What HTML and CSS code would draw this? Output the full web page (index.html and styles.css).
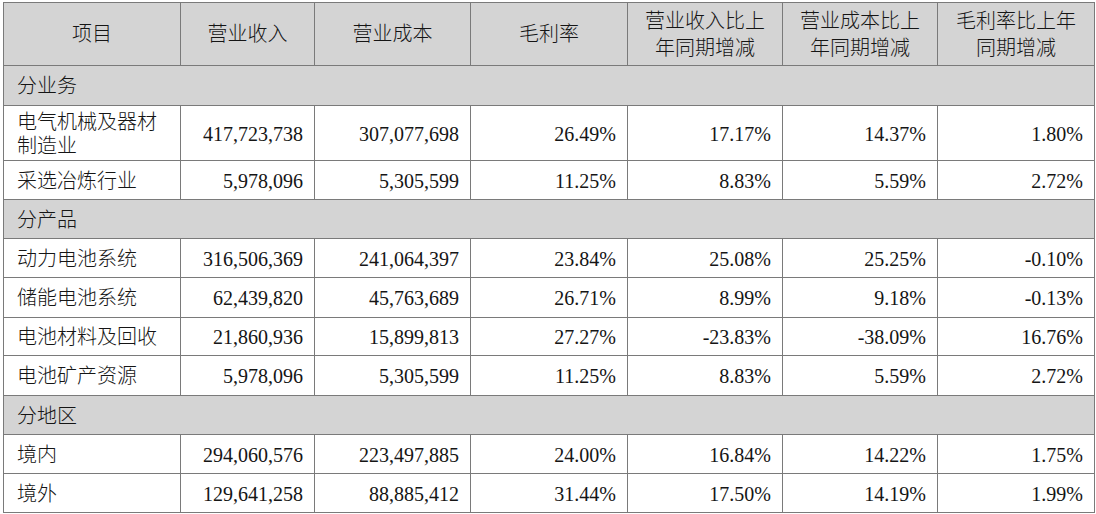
FILE: index.html
```html
<!DOCTYPE html>
<html lang="zh-CN">
<head>
<meta charset="utf-8">
<link rel="stylesheet" href="styles.css">
</head>
<body>
<div class="wrap">
<table class="fin">
<colgroup>
<col class="c1"><col class="c2"><col class="c3"><col class="c4"><col class="c5"><col class="c6"><col class="c7">
</colgroup>
<thead>
<tr class="hd">
<th>项目</th><th>营业收入</th><th>营业成本</th><th>毛利率</th><th>营业收入比上<br>年同期增减</th><th>营业成本比上<br>年同期增减</th><th>毛利率比上年<br>同期增减</th>
</tr>
</thead>
<tbody>
<tr class="sec h40"><td colspan="7">分业务</td></tr>
<tr class="h55"><td class="lbl two">电气机械及器材<br>制造业</td><td>417,723,738</td><td>307,077,698</td><td>26.49%</td><td>17.17%</td><td>14.37%</td><td>1.80%</td></tr>
<tr class="h39"><td class="lbl">采选冶炼行业</td><td>5,978,096</td><td>5,305,599</td><td>11.25%</td><td>8.83%</td><td>5.59%</td><td>2.72%</td></tr>
<tr class="sec h39"><td colspan="7">分产品</td></tr>
<tr class="h39"><td class="lbl">动力电池系统</td><td>316,506,369</td><td>241,064,397</td><td>23.84%</td><td>25.08%</td><td>25.25%</td><td>-0.10%</td></tr>
<tr class="h40"><td class="lbl">储能电池系统</td><td>62,439,820</td><td>45,763,689</td><td>26.71%</td><td>8.99%</td><td>9.18%</td><td>-0.13%</td></tr>
<tr class="h38"><td class="lbl">电池材料及回收</td><td>21,860,936</td><td>15,899,813</td><td>27.27%</td><td>-23.83%</td><td>-38.09%</td><td>16.76%</td></tr>
<tr class="h40"><td class="lbl">电池矿产资源</td><td>5,978,096</td><td>5,305,599</td><td>11.25%</td><td>8.83%</td><td>5.59%</td><td>2.72%</td></tr>
<tr class="sec h39"><td colspan="7">分地区</td></tr>
<tr class="h39"><td class="lbl">境内</td><td>294,060,576</td><td>223,497,885</td><td>24.00%</td><td>16.84%</td><td>14.22%</td><td>1.75%</td></tr>
<tr class="h39"><td class="lbl">境外</td><td>129,641,258</td><td>88,885,412</td><td>31.44%</td><td>17.50%</td><td>14.19%</td><td>1.99%</td></tr>
</tbody>
</table>
</div>
</body>
</html>
```

FILE: styles.css
```css
html, body {
  margin: 0;
  padding: 0;
  background: #ffffff;
}

.wrap {
  padding: 2px 0 0 3px;
}

.fin {
  border-collapse: collapse;
  table-layout: fixed;
  width: 1091px;
  font-family: "Liberation Serif", "Noto Sans CJK SC", serif;
  font-size: 20px;
  font-weight: 300;
  color: #151515;
}

.c1 { width: 177px; }
.c2 { width: 134px; }
.c3 { width: 156px; }
.c4 { width: 157px; }
.c5 { width: 155px; }
.c6 { width: 155px; }
.c7 { width: 157px; }

.fin th,
.fin td {
  border: 1px solid #7a7a7a;
  padding: 1px 11px 0 13px;
  line-height: 24px;
  white-space: nowrap;
  overflow: hidden;
}

.fin th {
  background: #d4d4d4;
  font-weight: 300;
  text-align: center;
  line-height: 27px;
  height: 61px;
  padding: 1px 4px 0;
}

.fin td {
  text-align: right;
}

.fin td.lbl {
  text-align: left;
}

.sec td {
  background: #d4d4d4;
  text-align: left;
}

.h38 { height: 38px; }
.h39 { height: 39px; }
.h40 { height: 40px; }
.h55 { height: 55px; }
```
